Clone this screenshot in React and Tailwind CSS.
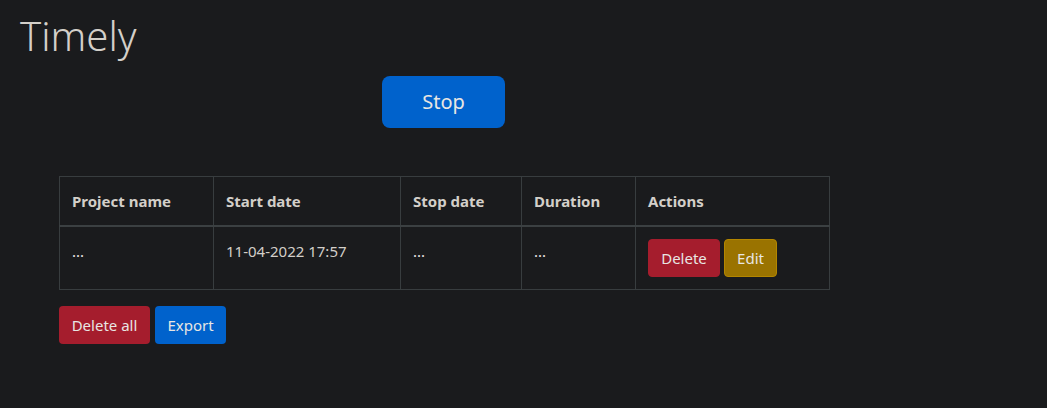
import React, { useState } from 'react';

const FONT = { fontFamily: '"Noto Sans", "Liberation Sans", sans-serif' };

const COLUMNS = [
  { label: 'Project name', width: 'w-[154px]' },
  { label: 'Start date', width: 'w-[187px]' },
  { label: 'Stop date', width: 'w-[121px]' },
  { label: 'Duration', width: 'w-[114px]' },
  { label: 'Actions', width: 'w-[194px]' },
];

export default function App() {
  const [entries, setEntries] = useState([
    { id: 1, project: '...', start: '11-04-2022 17:57', stop: '...', duration: '...' },
  ]);

  function removeEntry(id) {
    setEntries(prev => prev.filter(e => e.id !== id));
  }

  return (
    <div className="min-h-screen w-full bg-[#1a1b1d] text-[#d3cfc9]" style={FONT}>
      <div className="pl-[20px] pt-[12px]">
        <h1 className="text-[40px] leading-[48px] font-light">Timely</h1>
      </div>

      <div className="mt-[16px] pl-[382px]">
        <button className="h-[52px] w-[123px] rounded-[8px] bg-[#0062cc] text-[20px] text-[#e8e6e3]">
          Stop
        </button>
      </div>

      <div className="mt-[48px] pl-[59px]">
        <table className="w-[770px] table-fixed border-collapse text-[15px]">
          <thead>
            <tr className="border-b-2 border-[#3b4042]">
              {COLUMNS.map(col => (
                <th
                  key={col.label}
                  className={`${col.width} border border-[#383d3f] px-[12px] py-[12px] text-left font-bold leading-[24px]`}
                >
                  {col.label}
                </th>
              ))}
            </tr>
          </thead>
          <tbody>
            {entries.map(entry => (
              <tr key={entry.id}>
                <td className="h-[63px] border border-[#383d3f] px-[12px] py-[12px] align-top leading-[24px] text-[#e8e6e3]">{entry.project}</td>
                <td className="border border-[#383d3f] px-[12px] py-[12px] align-top leading-[24px]">{entry.start}</td>
                <td className="border border-[#383d3f] px-[12px] py-[12px] align-top leading-[24px] text-[#e8e6e3]">{entry.stop}</td>
                <td className="border border-[#383d3f] px-[12px] py-[12px] align-top leading-[24px] text-[#e8e6e3]">{entry.duration}</td>
                <td className="border border-[#383d3f] px-[12px] py-[12px] align-top">
                  <div className="flex gap-[4px]">
                    <button
                      onClick={() => removeEntry(entry.id)}
                      className="h-[38px] w-[72px] rounded-[4px] border border-[#a51d2d] bg-[#a51d2d] text-[15px] text-[#e8e6e3]"
                    >
                      Delete
                    </button>
                    <button className="h-[38px] w-[53px] rounded-[4px] border border-[#b38600] bg-[#9a7300] text-[15px] text-[#e8e6e3]">
                      Edit
                    </button>
                  </div>
                </td>
              </tr>
            ))}
          </tbody>
        </table>

        <div className="mt-[16px] flex gap-[5px]">
          <button
            onClick={() => setEntries([])}
            className="h-[38px] w-[91px] rounded-[4px] bg-[#a51d2d] text-[15px] text-[#e8e6e3]"
          >
            Delete all
          </button>
          <button className="h-[38px] w-[71px] rounded-[4px] bg-[#0062cc] text-[15px] text-[#e8e6e3]">
            Export
          </button>
        </div>
      </div>
    </div>
  );
}
